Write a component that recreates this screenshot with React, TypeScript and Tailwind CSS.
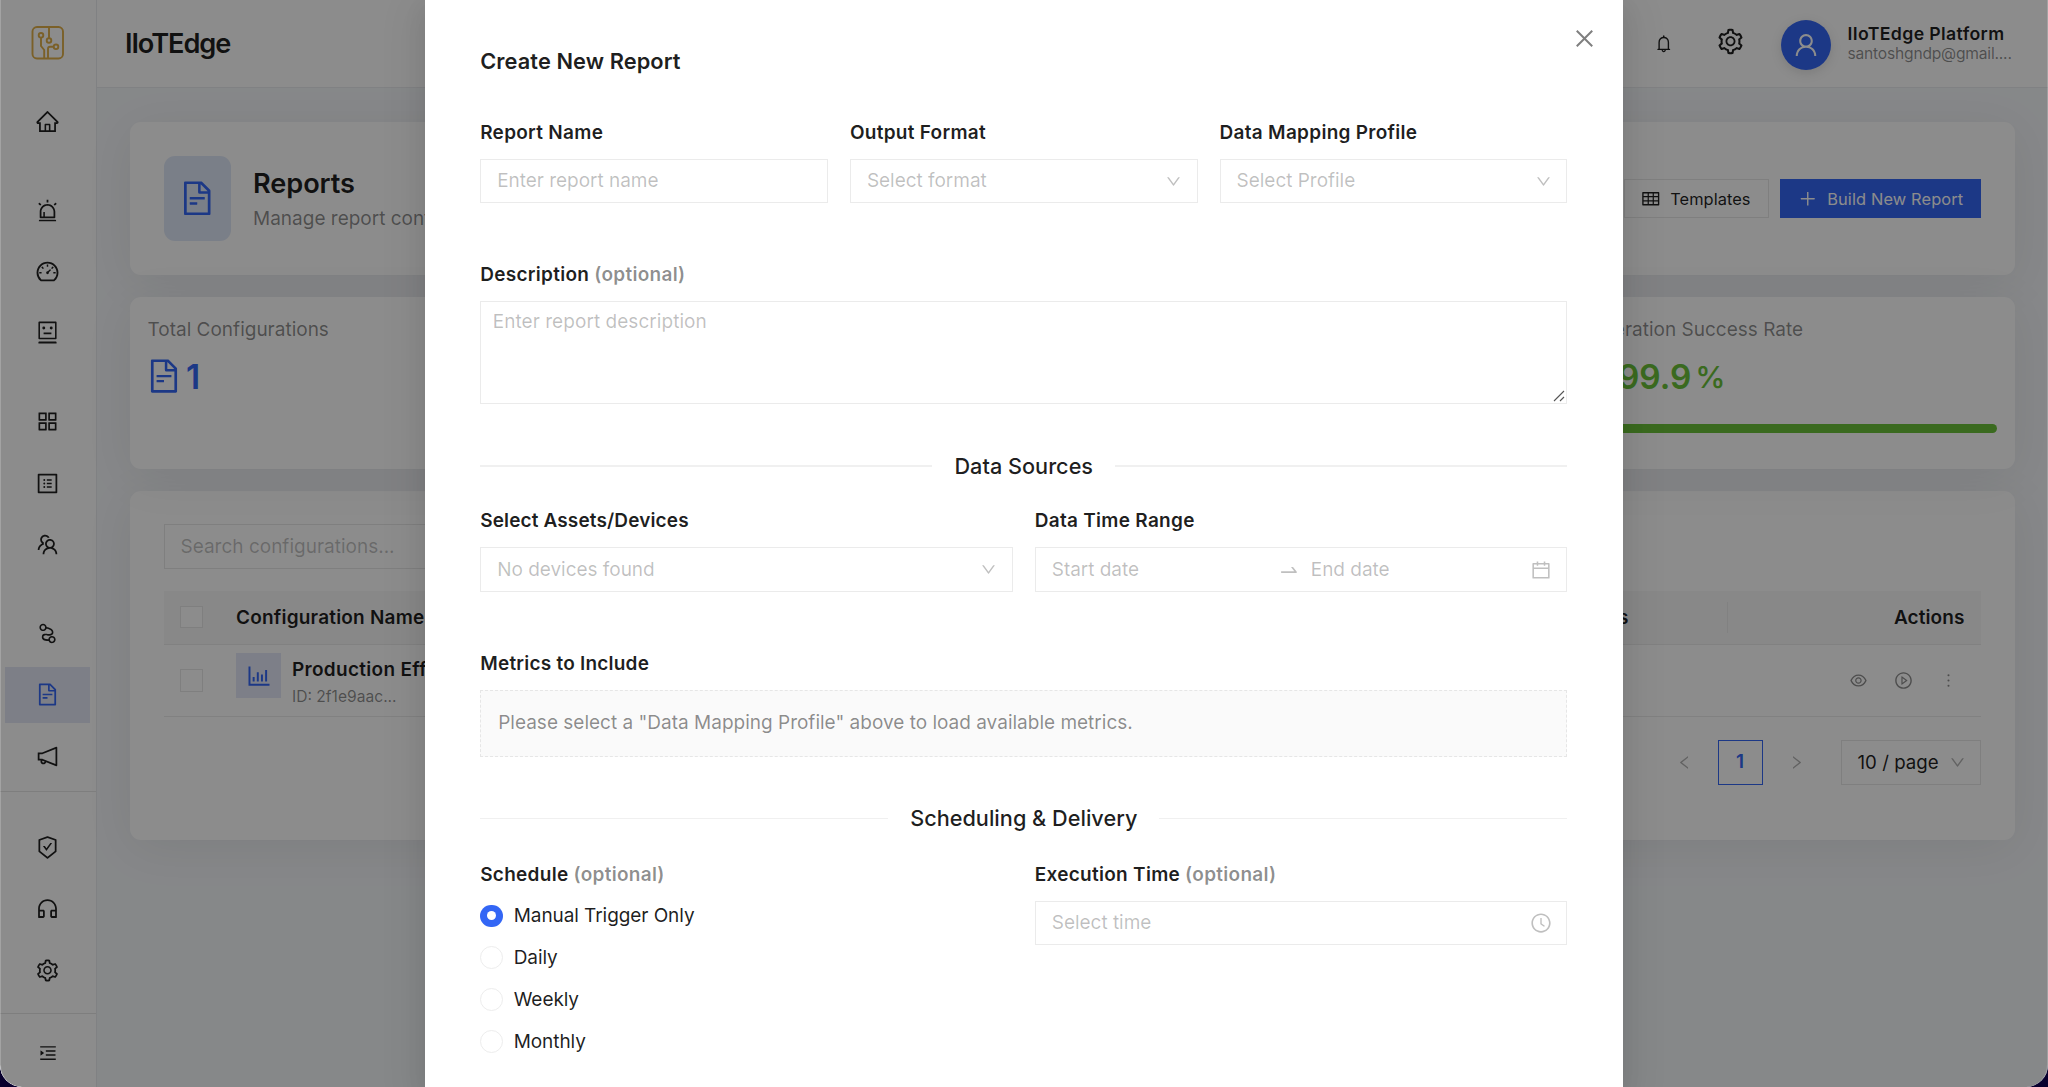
import React from "react";
import type { ReactNode } from "react";
import type { IconType } from "react-icons";
import {
  AiOutlineAlert,
  AiOutlineAppstore,
  AiOutlineBarChart,
  AiOutlineBell,
  AiOutlineCalendar,
  AiOutlineClockCircle,
  AiOutlineClose,
  AiOutlineCustomerService,
  AiOutlineDashboard,
  AiOutlineDown,
  AiOutlineEye,
  AiOutlineFileText,
  AiOutlineHome,
  AiOutlineLeft,
  AiOutlineMenuUnfold,
  AiOutlineMore,
  AiOutlineNodeIndex,
  AiOutlineNotification,
  AiOutlinePlayCircle,
  AiOutlinePlus,
  AiOutlineProfile,
  AiOutlineRight,
  AiOutlineRobot,
  AiOutlineSafetyCertificate,
  AiOutlineSetting,
  AiOutlineSwapRight,
  AiOutlineTable,
  AiOutlineTeam,
  AiOutlineUser,
} from "react-icons/ai";

const cardClass = "rounded-[11px] bg-white shadow-[0_8px_50px_rgba(0,0,0,0.07)]";

function Logo() {
  return (
    <svg width="34" height="36" viewBox="0 0 34 36" fill="none" stroke="#e0b04a" strokeWidth="1.9">
      <rect x="1.5" y="2" width="30.5" height="31.5" rx="4.5" />
      <circle cx="10" cy="10.3" r="2.3" />
      <circle cx="18" cy="15.5" r="2.3" />
      <circle cx="25" cy="21.8" r="2.3" />
      <path d="M18 2v11.2M10 12.6V21l3.2 4v8.5M17 33.5v-9.7q0-2 2-2h3.7" />
    </svg>
  );
}

function NavItem({ icon: Icon, active = false }: { icon: IconType; active?: boolean }) {
  return (
    <div
      className={
        active
          ? "mx-[5px] flex h-[56px] items-center justify-center bg-[#e3e7f6] text-[#3366f5]"
          : "mx-[5px] flex h-[56px] items-center justify-center text-black/88"
      }
    >
      <Icon size={25} />
    </div>
  );
}

function NavGroup({ icons, activeIndex, className }: { icons: IconType[]; activeIndex?: number; className: string }) {
  return (
    <div className={`flex shrink-0 flex-col gap-[5.3px] ${className}`}>
      {icons.map((icon, i) => (
        <NavItem key={i} icon={icon} active={i === activeIndex} />
      ))}
    </div>
  );
}

function Sidebar() {
  return (
    <aside className="flex w-[97px] shrink-0 flex-col border-r border-[#e9ebee] bg-white pr-[1px]">
      <div className="flex h-[93px] shrink-0 items-start justify-center pt-[25px] pl-[0.5px]">
        <Logo />
      </div>
      <NavGroup icons={[AiOutlineHome]} className="" />
      <NavGroup icons={[AiOutlineAlert, AiOutlineDashboard, AiOutlineRobot]} className="mt-[33.3px]" />
      <NavGroup icons={[AiOutlineAppstore, AiOutlineProfile, AiOutlineTeam]} className="mt-[33px]" />
      <NavGroup
        icons={[AiOutlineNodeIndex, AiOutlineFileText, AiOutlineNotification]}
        activeIndex={1}
        className="mt-[33px]"
      />
      <div className="-mr-px mt-[7px] h-px shrink-0 bg-[#e6e6e6]" />
      <NavGroup
        icons={[AiOutlineSafetyCertificate, AiOutlineCustomerService, AiOutlineSetting]}
        className="mt-[27.5px]"
      />
      <div className="-mr-px mt-[14.5px] h-px shrink-0 bg-[#e6e6e6]" />
      <div className="flex flex-1 items-center justify-center pt-[5px] text-black/88">
        <AiOutlineMenuUnfold size={20} />
      </div>
    </aside>
  );
}

function Header() {
  return (
    <header className="flex h-[88px] shrink-0 items-center justify-between border-b border-[#e9ebee] bg-white pl-[28px]">
      <div className="pt-[2px] text-[27.2px] font-semibold tracking-[-1.1px] text-black/88">IIoTEdge</div>
      <div className="flex items-center">
        <AiOutlineBell size={19.5} className="mr-[42.5px] text-black/88" />
        <AiOutlineSetting size={29} className="mb-[5px] mr-[36px] text-black/88" />
        <div className="mt-[2px] flex size-[50px] items-center justify-center rounded-full bg-[#3366f5] text-white shadow-[0_3px_12px_rgba(0,0,0,0.12)]">
          <AiOutlineUser size={28} />
        </div>
        <div className="ml-[17px] w-[200.5px]">
          <div className="text-[17.7px] leading-[20px] font-semibold tracking-[0.36px] whitespace-nowrap text-black/88">
            IIoTEdge Platform
          </div>
          <div className="text-[15.6px] leading-[19px] tracking-[-0.2px] whitespace-nowrap text-black/45">
            santoshgndp@gmail....
          </div>
        </div>
      </div>
    </header>
  );
}

function TitleCard() {
  return (
    <section className={`flex h-[153px] items-center justify-between px-[33.5px] ${cardClass}`}>
      <div className="flex items-center">
        <div className="flex h-[85px] w-[67px] items-center justify-center rounded-[11px] bg-[#dfe8f8] text-[#3366f5]">
          <AiOutlineFileText size={38.5} />
        </div>
        <div className="ml-[22.5px] pt-[2px]">
          <div className="text-[27.2px] leading-[38px] font-semibold tracking-[-0.1px] text-black/88">Reports</div>
          <div className="text-[19px] leading-[31px] whitespace-nowrap text-black/45">Manage report configurations</div>
        </div>
      </div>
      <div className="flex items-center gap-[11px] text-[16.4px] tracking-[0.05px]">
        <div className="flex h-[39px] items-center gap-[9.5px] border border-[#e8e8e8] pr-[17.5px] pl-[16px] text-black/88">
          <AiOutlineTable size={19.5} />
          <span className="pt-[1px]">Templates</span>
        </div>
        <div className="flex h-[39px] w-[201px] items-center justify-center gap-[10px] bg-[#3366f5] text-white">
          <AiOutlinePlus size={19.5} />
          <span className="pt-[1px] tracking-[0.12px]">Build New Report</span>
        </div>
      </div>
    </section>
  );
}

function StatCards() {
  return (
    <section className="mt-[22px] grid h-[171.5px] grid-cols-4 gap-[22px]">
      <div className={`px-[17.5px] pt-[17px] ${cardClass}`}>
        <div className="text-[19px] leading-[31px] text-black/45">Total Configurations</div>
        <div className="mt-[8px] flex items-center text-[#3366f5]">
          <AiOutlineFileText size={38} className="-ml-[3px]" />
          <span className="ml-[3.5px] pt-[2px] text-[33.4px] leading-[44px] font-semibold">1</span>
        </div>
      </div>
      <div className={cardClass} />
      <div className={cardClass} />
      <div className={`px-[17.5px] pt-[17px] ${cardClass}`}>
        <div className="text-[19px] leading-[31px] text-black/45">Generation Success Rate</div>
        <div className="mt-[9px] flex items-center pl-[40.5px] text-[33.4px] leading-[46px] font-semibold text-[#6bc23a]">
          <span>99.9</span>
          <span className="ml-[4px] text-[30.5px] font-medium">%</span>
        </div>
        <div className="mt-[24px] h-[9px] rounded-full bg-[#6bc23a]" />
      </div>
    </section>
  );
}

function Checkbox() {
  return <div className="size-[22.5px] shrink-0 border border-[#e8e8e8] bg-white" />;
}

function TableCard() {
  return (
    <section className={`mt-[22px] h-[349px] px-[33.5px] pt-[33px] text-[19px] ${cardClass}`}>
      <div className="flex h-[45px] w-[420px] items-center border border-[#e8e8e8] pt-[2px] pl-[16px] text-black/25">
        Search configurations...
      </div>
      <div className="mt-[22px] flex h-[54px] items-center border-b border-[#ebebeb] bg-[#f8f8f8] pr-[16.5px] pl-[16.5px] font-semibold tracking-[0.1px] text-black/88">
        <Checkbox />
        <div className="ml-[33.5px] pt-[1.5px] tracking-[0.2px]">Configuration Name</div>
        <div className="ml-auto w-[157.5px] pt-[1.5px]">Status</div>
        <div className="h-[31px] w-px bg-[#ebebeb]" />
        <div className="w-[237px] pt-[1.5px] text-right">Actions</div>
      </div>
      <div className="flex h-[72.5px] items-center border-b border-[#ebebeb] pr-[23.5px] pl-[16.5px]">
        <Checkbox />
        <div className="mb-[9px] ml-[33.5px] flex size-[45px] items-center justify-center bg-[#e4e8f8] text-[#3366f5]">
          <AiOutlineBarChart size={28} />
        </div>
        <div className="ml-[11px] pt-[4px]">
          <div className="leading-[30px] font-semibold tracking-[0.3px] whitespace-nowrap text-black/88">
            Production Efficiency
          </div>
          <div className="text-[15.6px] leading-[24px] text-black/45">ID: 2f1e9aac...</div>
        </div>
        <div className="ml-auto flex items-center gap-[26px] text-black/45">
          <AiOutlineEye size={19} />
          <AiOutlinePlayCircle size={19} />
          <AiOutlineMore size={19} />
        </div>
      </div>
      <div className="mt-[22.5px] flex h-[45px] items-center justify-end">
        <AiOutlineLeft size={17} className="text-black/30" />
        <div className="ml-[25px] flex size-[45px] items-center justify-center border-[1.5px] border-[#3366f5] pt-[1px] font-semibold text-[#3366f5]">
          1
        </div>
        <AiOutlineRight size={17} className="ml-[25px] text-black/30" />
        <div className="ml-[36px] flex h-[45px] w-[140.5px] items-center justify-between border border-[#e8e8e8] pr-[14px] pl-[16px] text-[18.7px] text-black/88">
          <span className="pt-[2px]">10 / page</span>
          <AiOutlineDown size={17} className="text-black/30" />
        </div>
      </div>
    </section>
  );
}

function Label({
  children,
  optional = false,
  className = "tracking-[0.28px]",
}: {
  children: ReactNode;
  optional?: boolean;
  className?: string;
}) {
  return (
    <div className={`h-[30px] leading-[30px] font-semibold whitespace-nowrap text-black/88 ${className}`}>
      {children}
      {optional && <span className="text-black/45"> (optional)</span>}
    </div>
  );
}

function Field({ children, icon }: { children: ReactNode; icon?: ReactNode }) {
  return (
    <div className="mt-[11px] flex h-[44.5px] items-center justify-between border border-[#ebebeb] pt-[1px] pr-[14.5px] pl-[16px] tracking-[-0.03px] text-black/25">
      {children}
      {icon}
    </div>
  );
}

function SectionDivider({ children, className }: { children: ReactNode; className: string }) {
  return (
    <div className={`flex h-[34px] items-center ${className}`}>
      <div className="h-[1.5px] flex-1 bg-[#f0f0f0]" />
      <div className="px-[22px] text-[21.7px] font-medium text-black/88">{children}</div>
      <div className="h-[1.5px] flex-1 bg-[#f0f0f0]" />
    </div>
  );
}

function Radio({ label, checked = false }: { label: string; checked?: boolean }) {
  return (
    <div className="flex h-[41.8px] items-center text-[19px] tracking-[-0.07px] text-black/88">
      {checked ? (
        <div className="flex size-[22.5px] items-center justify-center rounded-full bg-[#3366f5]">
          <div className="size-[9px] rounded-full bg-white" />
        </div>
      ) : (
        <div className="size-[22.5px] rounded-full border-[1.5px] border-[#ededed]" />
      )}
      <span className="ml-[11px] pt-[1px]">{label}</span>
    </div>
  );
}

function ReportModal() {
  return (
    <div className="relative h-full w-[1198.5px] bg-white px-[55.7px] pt-[46px] text-[19px] shadow-[0_8px_22px_rgba(0,0,0,0.08),0_12px_39px_11px_rgba(0,0,0,0.06)]">
      <AiOutlineClose size={25} className="absolute top-[26px] right-[26.5px] text-black/50" />
      <h1 className="h-[30px] text-[21.8px] leading-[30px] font-semibold tracking-[0.08px] text-black/88">
        Create New Report
      </h1>
      <div className="mt-[41.5px] grid grid-cols-3 gap-[22px]">
        <div>
          <Label>Report Name</Label>
          <Field>Enter report name</Field>
        </div>
        <div>
          <Label>Output Format</Label>
          <Field icon={<AiOutlineDown size={17} />}>Select format</Field>
        </div>
        <div>
          <Label>Data Mapping Profile</Label>
          <Field icon={<AiOutlineDown size={17} />}>Select Profile</Field>
        </div>
      </div>
      <Label optional className="mt-[56.5px] tracking-[0.28px]">
        Description
      </Label>
      <div className="mt-[11px] flex h-[103px] justify-between border border-[#ebebeb] pt-[5px] pl-[11.5px] leading-[30px] tracking-[0.05px] text-black/25">
        Enter report description
        <svg width="14" height="14" viewBox="0 0 14 14" className="self-end" stroke="#555" strokeWidth="1.1">
          <path d="M2 12L12 2M8 12L12 8" />
        </svg>
      </div>
      <SectionDivider className="mt-[45.5px]">Data Sources</SectionDivider>
      <div className="mt-[23px] grid grid-cols-2 gap-[22px]">
        <div>
          <Label className="tracking-[0.13px]">Select Assets/Devices</Label>
          <Field icon={<AiOutlineDown size={17} />}>No devices found</Field>
        </div>
        <div>
          <Label>Data Time Range</Label>
          <Field icon={<AiOutlineCalendar size={22} />}>
            <span className="w-[222px]">Start date</span>
            <AiOutlineSwapRight size={22} />
            <span className="w-[222px] pl-[7px]">End date</span>
          </Field>
        </div>
      </div>
      <Label className="mt-[57px] tracking-[0.22px]">Metrics to Include</Label>
      <div className="mt-[11px] flex h-[67px] items-center border border-dashed border-[#e6e6e6] bg-[#fafafa] pl-[17px] text-black/45">
        Please select a "Data Mapping Profile" above to load available metrics.
      </div>
      <SectionDivider className="mt-[45px]">Scheduling &amp; Delivery</SectionDivider>
      <div className="mt-[24px] grid grid-cols-2 gap-[22px]">
        <div>
          <Label optional>Schedule</Label>
          <div className="mt-[5.5px]">
            <Radio label="Manual Trigger Only" checked />
            <Radio label="Daily" />
            <Radio label="Weekly" />
            <Radio label="Monthly" />
          </div>
        </div>
        <div>
          <Label optional>Execution Time</Label>
          <Field icon={<AiOutlineClockCircle size={22} />}>Select time</Field>
        </div>
      </div>
    </div>
  );
}

export default function App() {
  return (
    <div className="h-[1087px] w-[2048px] overflow-hidden bg-[#08002e] font-['Inter',sans-serif]">
      <div className="relative flex h-full overflow-hidden rounded-b-[22px] bg-[#f5f7fa]">
        <Sidebar />
        <div className="flex min-w-0 flex-1 flex-col">
          <Header />
          <main className="flex-1 pt-[34px] pr-[33.5px] pl-[33px]">
            <TitleCard />
            <StatCards />
            <TableCard />
          </main>
        </div>
        <div className="absolute inset-0 flex justify-center overflow-hidden rounded-b-[22px] border-x border-white/20 bg-black/45 pr-[0.5px]">
          <ReportModal />
        </div>
      </div>
    </div>
  );
}
